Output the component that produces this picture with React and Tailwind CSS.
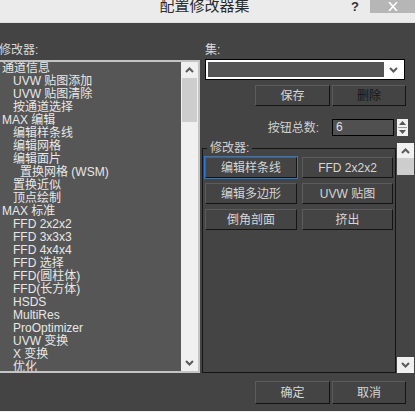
import React from "react";

const FONT = { fontFamily: '"Liberation Sans", "Noto Sans CJK SC", sans-serif' };

const items = [
  ["通道信息", 0],
  ["UVW 贴图添加", 1],
  ["UVW 贴图清除", 1],
  ["按通道选择", 1],
  ["MAX 编辑", 0],
  ["编辑样条线", 1],
  ["编辑网格", 1],
  ["编辑面片", 1],
  ["置换网格 (WSM)", 2],
  ["置换近似", 1],
  ["顶点绘制", 1],
  ["MAX 标准", 0],
  ["FFD 2x2x2", 1],
  ["FFD 3x3x3", 1],
  ["FFD 4x4x4", 1],
  ["FFD 选择", 1],
  ["FFD(圆柱体)", 1],
  ["FFD(长方体)", 1],
  ["HSDS", 1],
  ["MultiRes", 1],
  ["ProOptimizer", 1],
  ["UVW 变换", 1],
  ["X 变换", 1],
  ["优化", 1],
];

function Chevron({ up }) {
  return (
    <svg width="9" height="6" viewBox="0 0 9 6">
      <polyline
        points={up ? "1,5 4.5,1.5 8,5" : "1,1 4.5,4.5 8,1"}
        fill="none"
        stroke="#5a5a5a"
        strokeWidth="2"
      />
    </svg>
  );
}

function Btn({ children, dark, className = "" }) {
  return (
    <div
      className={
        "flex items-center justify-center bg-[#444444] border border-t-[#5c5c5c] border-l-[#5c5c5c] border-b-[#141414] border-r-[#141414] text-[12px] " +
        (dark ? "text-[#161616] " : "text-[#d6d6d6] ") +
        className
      }
    >
      {children}
    </div>
  );
}

export default function App() {
  return (
    <div className="w-[415px] h-[412px] bg-[#444444] overflow-hidden flex flex-col" style={FONT}>
      {/* title bar */}
      <div className="relative h-[23px] shrink-0 bg-[#ebebeb] border-b border-[#dedede] flex justify-center">
        <div className="text-[15px] leading-[15px] -mt-[2px] text-[#2b2b2b] pr-[6px]">配置修改器集</div>
        <div className="absolute left-[351px] top-[-3px] text-[13px] text-[#333] font-bold">?</div>
        <div className="absolute left-[370px] top-0 w-[45px] h-[13px] bg-[#b6b6b6] flex items-center justify-center">
          <svg width="10" height="9" viewBox="0 0 10 9">
            <path d="M1 0 L9 9 M9 0 L1 9" stroke="#fff" strokeWidth="1.6" />
          </svg>
        </div>
      </div>

      <div className="flex flex-1 min-h-0">
        {/* left column */}
        <div className="w-[202px] -ml-[2px] shrink-0 pt-[20px] flex flex-col">
          <div className="h-[17px] pl-[1px] text-[12px] leading-[14px] text-[#d8d8d8]">修改器:</div>
          <div className="h-[313px] border-2 border-[#c4c4c4] bg-[#565656] flex">
            <div className="flex-1 overflow-hidden">
              {items.map(([t, lvl], i) => (
                <div
                  key={i}
                  className={
                    "h-[13px] leading-[13px] text-[12px] whitespace-nowrap text-[#e8e8e8] " +
                    (lvl === 0 ? "pl-[2px]" : lvl === 1 ? "pl-[13px]" : "pl-[20px]")
                  }
                >
                  {t}
                </div>
              ))}
            </div>
            <div className="w-[17px] shrink-0 bg-[#f0f0f0] flex flex-col">
              <div className="h-[16px] flex items-center justify-center">
                <Chevron up />
              </div>
              <div className="h-[44px] mx-[1px] bg-[#cdcdcd]" />
              <div className="flex-1" />
              <div className="h-[16px] flex items-center justify-center">
                <Chevron />
              </div>
            </div>
          </div>
        </div>

        {/* right column */}
        <div className="flex-1 pt-[20px] flex flex-col">
          <div className="h-[16px] pl-[5px] text-[12px] leading-[14px] text-[#d8d8d8]">集:</div>
          <div className="ml-[5px] w-[200px] h-[21px] border border-black bg-white p-[2px] flex">
            <div className="flex-1 bg-[#555555]" />
            <div className="w-[18px] flex items-center justify-center">
              <Chevron />
            </div>
          </div>
          <div className="mt-[5px] ml-[55px] flex gap-[2px] h-[21px]">
            <Btn className="w-[75px]">保存</Btn>
            <Btn className="w-[74px]" dark>删除</Btn>
          </div>
          <div className="mt-[13px] h-[17px] flex items-center">
            <div className="w-[132px] text-right text-[12px] text-[#d0d0d0] pr-[13px]">按钮总数:</div>
            <div className="w-[62px] h-[17px] border border-black bg-[#505050] text-[12px] leading-[15px] pl-[3px] text-[#e0e0e0]">6</div>
            <div className="ml-[3px] w-[11px] h-[17px] bg-[#f0f0f0] flex flex-col items-center justify-center gap-[2px]">
              <svg width="7" height="4" viewBox="0 0 7 4"><polygon points="0,4 3.5,0 7,4" fill="#555" /></svg>
              <div className="w-[9px] h-px bg-[#9a9a9a]" />
              <svg width="7" height="4" viewBox="0 0 7 4"><polygon points="0,0 3.5,4 7,0" fill="#555" /></svg>
            </div>
          </div>

          <div className="mt-[7px] flex">
            <div className="relative mt-[5px] ml-[2px] w-[194px] h-[225px] border border-[#141414] pl-[2px] pt-[8px]">
              <div className="absolute left-[4px] top-[-8px] px-[3px] bg-[#444444] text-[12px] leading-[14px] text-[#d0d0d0]">修改器:</div>
              <div className="grid grid-cols-[92px_91px] gap-x-[5px] gap-y-[5px]">
                <Btn className="h-[21px] ring-1 ring-[#2b78d2]">编辑样条线</Btn>
                <Btn className="h-[21px]">FFD 2x2x2</Btn>
                <Btn className="h-[21px]">编辑多边形</Btn>
                <Btn className="h-[21px]">UVW 贴图</Btn>
                <Btn className="h-[21px]">倒角剖面</Btn>
                <Btn className="h-[21px]">挤出</Btn>
              </div>
            </div>
            <div className="ml-[1px] w-[17px] h-[230px] flex flex-col">
              <div className="h-[15px] bg-[#f0f0f0] flex items-center justify-center"><Chevron up /></div>
              <div className="h-[17px] bg-[#cdcdcd]" />
              <div className="flex-1" />
              <div className="h-[16px] bg-[#f0f0f0] flex items-center justify-center"><Chevron /></div>
            </div>
          </div>

          <div className="mt-[8px] ml-[55px] flex gap-[2px] h-[23px]">
            <Btn className="w-[75px]">确定</Btn>
            <Btn className="w-[74px]">取消</Btn>
          </div>
        </div>
      </div>
      <div className="h-[1px] shrink-0 bg-[#f0f0f0]" />
    </div>
  );
}
